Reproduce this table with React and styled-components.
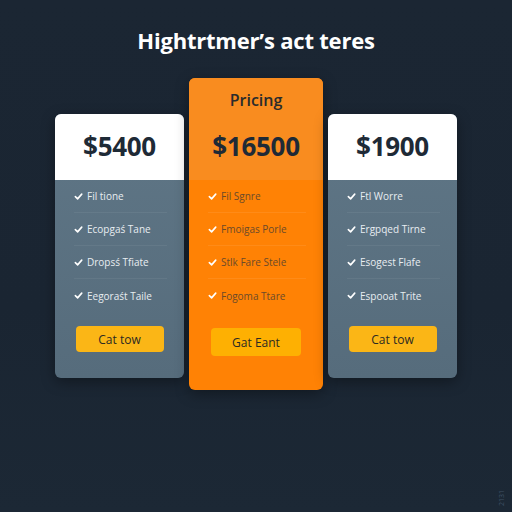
import styled, { createGlobalStyle } from "styled-components";

const Global = createGlobalStyle`
    html, body {
        margin: 0;
        padding: 0;
        background: #1b2633;
    }
    body {
        font-family: "Open Sans", "Liberation Sans", sans-serif;
    }
`;

const Page = styled.div`
    width: 512px;
    height: 512px;
    background: linear-gradient(180deg, #1b2633 0%, #1a2532 60%, #1c2835 100%);
    display: flex;
    flex-direction: column;
    align-items: center;
    box-sizing: border-box;
    padding-top: 25px;
    position: relative;
`;

const Heading = styled.h1`
    margin: 0;
    color: #ffffff;
    font-size: 22px;
    font-weight: 700;
    letter-spacing: -0.2px;
    line-height: 30px;
`;

const Row = styled.div`
    display: flex;
    align-items: flex-start;
    gap: 5px;
    margin-top: 23px;
`;

const Card = styled.div`
    width: ${(p) => (p.$featured ? 134 : 129)}px;
    margin-top: ${(p) => (p.$featured ? 0 : 36)}px;
    border-radius: 6px;
    overflow: hidden;
    display: flex;
    flex-direction: column;
    background: ${(p) =>
        p.$featured
            ? "#ff8205"
            : "linear-gradient(180deg, #5f7686 0%, #566c7c 100%)"};
    box-shadow: 0 4px 14px rgba(0, 0, 0, 0.35);
    padding-bottom: ${(p) => (p.$featured ? 34 : 26)}px;
`;

const Header = styled.div`
    height: ${(p) => (p.$featured ? 102 : 66)}px;
    background: ${(p) => (p.$featured ? "#f98c1f" : "#ffffff")};
    display: flex;
    flex-direction: column;
    align-items: center;
    justify-content: flex-end;
    padding-bottom: 19px;
    box-sizing: border-box;
`;

const Label = styled.div`
    color: #2a2b2c;
    font-size: 16px;
    font-weight: 600;
    line-height: 22px;
    margin-bottom: 20px;
`;

const Price = styled.div`
    color: #1e2a36;
    font-size: 26px;
    font-weight: 700;
    line-height: 30px;
    letter-spacing: -0.3px;
`;

const List = styled.ul`
    list-style: none;
    margin: 0 17px 0 19px;
    padding: 0;
`;

const Item = styled.li`
    display: flex;
    align-items: center;
    gap: 4px;
    height: 33px;
    box-sizing: border-box;
    font-size: 10px;
    color: ${(p) => (p.$featured ? "#6b4a2a" : "#e8edf1")};
    border-bottom: 1px solid
        ${(p) => (p.$featured ? "rgba(255,255,255,0.08)" : "rgba(255,255,255,0.06)")};
    &:last-child {
        border-bottom: none;
    }
`;

const Check = styled.svg`
    width: 9px;
    height: 9px;
    flex-shrink: 0;
`;

const Button = styled.button`
    align-self: center;
    margin-top: ${(p) => (p.$featured ? 16 : 14)}px;
    width: ${(p) => (p.$featured ? 90 : 88)}px;
    height: ${(p) => (p.$featured ? 28 : 26)}px;
    border: none;
    border-radius: 4px;
    background: ${(p) => (p.$featured ? "#feb002" : "#fbb616")};
    color: #2b2a22;
    font-family: inherit;
    font-size: 12px;
    font-weight: 500;
`;

const Corner = styled.div`
    position: absolute;
    right: 6px;
    bottom: 6px;
    color: #3e5063;
    font-size: 7px;
    writing-mode: vertical-rl;
    transform: rotate(180deg);
`;

const plans = [
    {
        price: "$5400",
        features: ["Fil tione", "Ecopgaś Tane", "Dropsś Tfiate", "Eegoraśt Taile"],
        cta: "Cat tow",
    },
    {
        label: "Pricing",
        price: "$16500",
        featured: true,
        features: ["Fil Sgnre", "Fmoigas Porle", "Stlk Fare Stele", "Fogoma Ttare"],
        cta: "Gat Eant",
    },
    {
        price: "$1900",
        features: ["Ftl Worre", "Ergpqed Tirne", "Esogest Flafe", "Espooat Trite"],
        cta: "Cat tow",
    },
];

const Tick = () => (
    <Check viewBox="0 0 10 10">
        <path d="M1.5 5.2 L4 7.6 L8.6 2.4" fill="none" stroke="#ffffff" strokeWidth="1.8" strokeLinecap="round" strokeLinejoin="round" />
    </Check>
);

const App = () => {
    return (
        <Page>
            <Global />
            <Heading>Hightrtmer’s act teres</Heading>
            <Row>
                {plans.map((plan) => (
                    <Card key={plan.price} $featured={plan.featured}>
                        <Header $featured={plan.featured}>
                            {plan.label && <Label>{plan.label}</Label>}
                            <Price>{plan.price}</Price>
                        </Header>
                        <List>
                            {plan.features.map((f) => (
                                <Item key={f} $featured={plan.featured}>
                                    <Tick /> {f}
                                </Item>
                            ))}
                        </List>
                        <Button $featured={plan.featured}>{plan.cta}</Button>
                    </Card>
                ))}
            </Row>
            <Corner>2131</Corner>
        </Page>
    );
};

export default App;
